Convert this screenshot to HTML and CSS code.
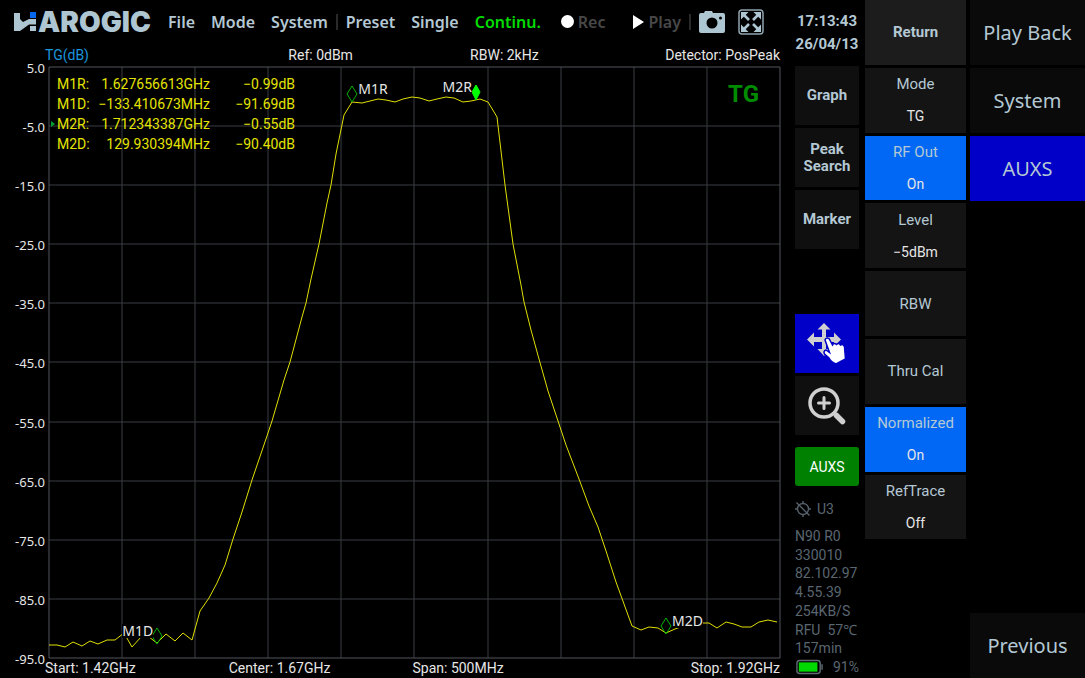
FILE: index.html
```html
<!DOCTYPE html>
<html lang="en">
<head>
    <meta charset="utf-8">
    <meta name="viewport" content="width=device-width, initial-scale=1">
    <title>Harogic - TG</title>
    <link rel="stylesheet" href="styles.css">
</head>
<body>
    <main class="screen">
        <header class="topbar">
            <div class="logo">
                <svg width="24" height="20" viewBox="0 0 24 20" aria-hidden="true">
                    <path fill="#aec5d2" d="M0 1 H6 V7 L9 10 L15 7 H22 V12.500 H15 L6 19 H0 Z M16 14 H22 V19 H16 Z"/>
                    <path fill="#0468f0" d="M16 0 H22 V6 H16 Z"/>
                </svg>
                <span class="logo-text">AROGIC</span>
            </div>
            <nav class="menu">
                <button class="menu-btn">File</button>
                <button class="menu-btn">Mode</button>
                <button class="menu-btn">System</button>
                <span class="divider"></span>
                <button class="menu-btn">Preset</button>
                <button class="menu-btn">Single</button>
                <button class="menu-btn running">Continu.</button>
                <button class="menu-btn dim rec"><span class="dot"></span>Rec</button>
                <button class="menu-btn dim play"><span class="triangle"></span>Play</button>
                <span class="divider"></span>
                <button class="icon-btn" aria-label="Screenshot">
                    <svg width="26" height="24" viewBox="0 0 26 24">
                        <path fill="#aec5d2" fill-rule="evenodd" d="M2 3 H5 L6 1 H13 L14 3 H24 Q26 3 26 5 V21 Q26 23 24 23 H2 Q0 23 0 21 V5 Q0 3 2 3 Z M13 7.500 A5.500 5.500 0 1 0 13 18.500 A5.500 5.500 0 1 0 13 7.500 Z M21.500 6.500 A1.500 1.500 0 1 0 21.500 9.500 A1.500 1.500 0 1 0 21.500 6.500 Z"/>
                    </svg>
                </button>
                <button class="icon-btn fullscreen" aria-label="Full screen">
                    <svg width="26" height="26" viewBox="0 0 26 26">
                        <rect x="1" y="1" width="24" height="24" rx="3" fill="none" stroke="#8fa3ae" stroke-width="1.500"/>
                        <g fill="#aec5d2" stroke="#aec5d2" stroke-width="2.600">
                            <path stroke="none" d="M3 3 H10.500 L3 10.500 Z M23 3 V10.500 L15.500 3 Z M3 23 V15.500 L10.500 23 Z M23 23 H15.500 L23 15.500 Z"/>
                            <path d="M5 5 L11 11 M21 5 L15 11 M5 21 L11 15 M21 21 L15 15"/>
                        </g>
                    </svg>
                </button>
            </nav>
        </header>

        <div class="info-row">
            <span class="trace-name">TG(dB)</span>
            <span>Ref: 0dBm</span>
            <span>RBW: 2kHz</span>
            <span>Detector: PosPeak</span>
        </div>

        <section class="chart">
            <div class="y-axis">
                <span>5.0</span>
                <span>-5.0</span>
                <span>-15.0</span>
                <span>-25.0</span>
                <span>-35.0</span>
                <span>-45.0</span>
                <span>-55.0</span>
                <span>-65.0</span>
                <span>-75.0</span>
                <span>-85.0</span>
                <span>-95.0</span>
            </div>
            <div class="plot">
                <svg class="graph" viewBox="0 0 731 591" preserveAspectRatio="none" aria-hidden="true">
                    <path class="grid" d="M73 0V591 M146 0V591 M219 0V591 M292 0V591 M365 0V591 M439 0V591 M512 0V591 M585 0V591 M658 0V591 M0 59H731 M0 118H731 M0 177H731 M0 236H731 M0 295H731 M0 355H731 M0 414H731 M0 473H731 M0 532H731"/>
                    <rect class="frame" x="0" y="0" width="731" height="591"/>
                    <polyline class="trace" points="0,578 8,578 16,580 24,575 33,579 41,574 49,577 58,573 66,573 75,566 83,580 92,570 100,570 108,576 117,567 126,574 134,566 143,573 151,544 160,531 168,516 176,498 184,472 193,445 203,413 219,366 223,354 235,313 241,295 253,250 257,236 262,212 270,177 278,136 282,118 287,87 295,48 303,35 313,36 321,34 329,32 337,33 346,35 354,32 363,30 371,31 380,34 388,32 397,30 405,31 414,35 422,34 431,32 439,35 448,50 456,118 464,177 472,218 475,235 482,263 490,292 499,324 509,354 517,378 530,412 540,439 549,460 557,484 567,515 583,559 592,563 600,560 609,561 617,566 626,562 634,559 651,556 660,556 668,561 677,555 685,557 693,560 702,560 710,555 719,553 728,555"/>
                </svg>

                <div class="marker right" style="left: 41.500%; top: 6%">
                    <svg width="12" height="18" viewBox="0 0 12 18"><path d="M6 1 L11 9 L6 17 L1 9 Z"/></svg>
                    <span>M1R</span>
                </div>
                <div class="marker left active" style="left: 58.400%; top: 5.600%">
                    <svg width="12" height="18" viewBox="0 0 12 18"><path d="M6 2 L10 9 L6 17 L2 9 Z"/></svg>
                    <span>M2R</span>
                </div>
                <div class="marker left" style="left: 14.800%; top: 97.600%">
                    <svg width="12" height="18" viewBox="0 0 12 18"><path d="M6 1 L11 9 L6 17 L1 9 Z"/></svg>
                    <span>M1D</span>
                </div>
                <div class="marker right" style="left: 84.400%; top: 95.900%">
                    <svg width="12" height="18" viewBox="0 0 12 18"><path d="M6 1 L11 9 L6 17 L1 9 Z"/></svg>
                    <span>M2D</span>
                </div>

                <table class="readout">
                    <tr><th scope="row">M1R:</th><td>1.627656613GHz</td><td>−0.99dB</td></tr>
                    <tr><th scope="row">M1D:</th><td>−133.410673MHz</td><td>−91.69dB</td></tr>
                    <tr class="selected"><th scope="row">M2R:</th><td>1.712343387GHz</td><td>−0.55dB</td></tr>
                    <tr><th scope="row">M2D:</th><td>129.930394MHz</td><td>−90.40dB</td></tr>
                </table>
                <div class="mode-tag">TG</div>
            </div>
        </section>

        <div class="freq-row">
            <span>Start: 1.42GHz</span>
            <span>Center: 1.67GHz</span>
            <span>Span: 500MHz</span>
            <span>Stop: 1.92GHz</span>
        </div>
    </main>

    <aside class="tools">
        <div class="clock">
            <time>17:13:43</time>
            <time>26/04/13</time>
        </div>
        <div class="tool-group">
            <button class="tool">Graph</button>
            <button class="tool">Peak Search</button>
            <button class="tool">Marker</button>
        </div>
        <div class="tool-group pointer-tools">
            <button class="tool selected" aria-label="Pan">
                <svg width="40" height="42" viewBox="0 0 40 42">
                    <path fill="#cfcfcf" d="M17 0 L23.500 6.500 H19 V14 H27 V9.500 L34 16.500 L27 23.500 V19 H19 V26 H23.500 L17 33 L10.500 26 H15 V19 H7 V23.500 L0 16.500 L7 9.500 V14 H15 V6.500 H10.500 Z"/>
                    <path fill="#fff" stroke="#0000c8" stroke-width="1.500" d="M18 17 Q19 14 22 15.500 L25.500 22 Q27 19.500 29.500 21.500 Q31.500 19.500 33.500 22 Q36.500 20.500 37.500 24 L38.500 36 L29 41 Q24 39 22 35 L17.500 31 Q16 28 19 27 L22.500 29.500 Z"/>
                </svg>
            </button>
            <button class="tool" aria-label="Zoom in">
                <svg width="40" height="40" viewBox="0 0 40 40" fill="none" stroke="#cfcfcf" stroke-linecap="round">
                    <circle cx="17" cy="17" r="14" stroke-width="3.500"/>
                    <path stroke-width="3" d="M17 11.500 V22.500 M11.500 17 H22.500"/>
                    <path stroke-width="3" d="M27 27 L29 29"/>
                    <path stroke-width="5.500" d="M29.500 29.500 L35.500 35.500"/>
                </svg>
            </button>
        </div>
        <button class="aux-btn">AUXS</button>
        <div class="status">
            <div class="gps">
                <svg width="16" height="16" viewBox="0 0 16 16" fill="none" stroke="#55616b" stroke-width="1.400">
                    <circle cx="8" cy="8" r="5.500"/>
                    <path d="M8 0V2.500 M8 13.500V16 M0 8H2.500 M13.500 8H16 M1.500 1.500 L14.500 14.500"/>
                </svg>
                <span>U3</span>
            </div>
            <span>N90 R0</span>
            <span>330010</span>
            <span>82.102.97</span>
            <span>4.55.39</span>
            <span>254KB/S</span>
            <span>RFU&nbsp; 57℃</span>
            <span>157min</span>
            <div class="battery">
                <svg width="29" height="16" viewBox="0 0 29 16">
                    <rect x="1" y="1" width="25" height="14" rx="3" fill="none" stroke="#5f6a74" stroke-width="1.500"/>
                    <rect x="3" y="3" width="20" height="10" fill="#00d800"/>
                    <path d="M28 5V11" stroke="#5f6a74" stroke-width="1.500"/>
                </svg>
                <span>91%</span>
            </div>
        </div>
    </aside>

    <aside class="softkeys">
        <button class="softkey return">Return</button>
        <button class="softkey">Mode<span>TG</span></button>
        <button class="softkey on">RF Out<span>On</span></button>
        <button class="softkey">Level<span>−5dBm</span></button>
        <button class="softkey">RBW</button>
        <button class="softkey">Thru Cal</button>
        <button class="softkey on">Normalized<span>On</span></button>
        <button class="softkey">RefTrace<span>Off</span></button>
    </aside>

    <nav class="tabs">
        <button class="tab">Play Back</button>
        <button class="tab">System</button>
        <button class="tab selected">AUXS</button>
        <button class="tab previous">Previous</button>
    </nav>
</body>
</html>
```
FILE: styles.css
```css
* {
    box-sizing: border-box;
}

body {
    display: grid;
    grid-template-columns: 1fr 64px 111px 115px;
    min-height: 100vh;
    margin: 0;
    background: #000;
    color: #e6e6e6;
    font-family: Roboto, "Noto Sans", sans-serif;
    font-size: 14px;
}

button {
    padding: 0;
    border: none;
    background: none;
    color: #b4c8d4;
    font-family: inherit;
    cursor: pointer;
}

svg {
    display: block;
}

/* Main screen */
.screen {
    display: flex;
    flex-direction: column;
    min-width: 0;
}

.topbar {
    display: flex;
    align-items: center;
    height: 43px;
    padding: 0 31px 0 14px;
}

.logo {
    display: flex;
    align-items: center;
    width: 154px;
}

.logo-text {
    font-family: Inter, sans-serif;
    font-size: 28px;
    font-weight: 900;
    line-height: 28px;
    color: #aec5d2;
}

.menu {
    display: flex;
    flex: 1;
    align-items: center;
    justify-content: space-between;
}

.menu-btn {
    display: flex;
    align-items: center;
    gap: 4px;
    font-family: "Noto Sans", sans-serif;
    font-size: 16px;
    font-weight: 600;
    line-height: 20px;
}

.running {
    color: #00dc00;
}

.dim {
    color: #484848;
}

.rec {
    margin-left: 4px;
}

.play {
    margin-left: 12px;
}

.fullscreen {
    margin-left: -3px;
}

.dot {
    width: 13px;
    height: 13px;
    border-radius: 50%;
    background: #fff;
}

.triangle {
    border-left: 11px solid #fff;
    border-top: 7px solid transparent;
    border-bottom: 7px solid transparent;
}

.divider {
    width: 2px;
    height: 16px;
    margin: 0 -8px;
    background: #2a2a2a;
}

.info-row,
.freq-row {
    display: grid;
    grid-template-columns: repeat(4, 1fr);
    padding: 0 15px 0 45px;
}

.info-row {
    height: 24px;
    line-height: 24px;
    text-align: center;
}

.info-row .trace-name {
    color: #1c96dc;
    text-align: left;
}

.info-row span:last-child,
.freq-row span:last-child {
    text-align: right;
}

/* Chart */
.chart {
    display: flex;
    flex: 1;
    padding-right: 15px;
}

.y-axis {
    display: flex;
    flex-direction: column;
    justify-content: space-between;
    width: 49px;
    margin: -8px 0 -10px;
    padding-right: 4px;
    font-family: "Noto Sans", sans-serif;
    font-size: 13px;
    line-height: 18px;
    text-align: right;
}

.plot {
    position: relative;
    flex: 1;
}

.graph {
    position: absolute;
    inset: 0;
    width: 100%;
    height: 100%;
    overflow: visible;
}

.graph * {
    fill: none;
    vector-effect: non-scaling-stroke;
}

.grid {
    stroke: #3a3d42;
}

.frame {
    stroke: #50545a;
}

.trace {
    stroke: #e0e000;
}

/* The diamond's lower tip is the marked point */
.marker {
    position: absolute;
}

.marker svg {
    position: absolute;
    left: -6px;
    bottom: -1px;
    fill: none;
    stroke: #00b400;
}

.marker span {
    position: absolute;
    bottom: 6px;
    background: #000;
    font-family: "Noto Sans", sans-serif;
    font-size: 14px;
    line-height: 14px;
}

.marker.right span {
    left: 6px;
}

.marker.left span {
    right: 4px;
}

.marker.active svg {
    fill: #00ff00;
    stroke: #00ff00;
}

.readout {
    position: absolute;
    top: 7px;
    left: 8px;
    width: 238px;
    border-collapse: collapse;
    color: #e4e400;
    line-height: 20px;
}

.readout th,
.readout td {
    padding: 0;
    font-weight: 400;
    text-align: right;
}

.readout th {
    width: 32px;
    text-align: left;
}

.readout td:last-child {
    width: 85px;
}

.readout .selected th::before {
    content: "";
    position: absolute;
    left: -6px;
    margin-top: 7px;
    border-left: 4px solid #00a030;
    border-top: 3px solid transparent;
    border-bottom: 3px solid transparent;
}

.mode-tag {
    position: absolute;
    top: 14px;
    right: 21px;
    color: #008c00;
    font-size: 24px;
    font-weight: 700;
    line-height: 26px;
}

.freq-row {
    height: 20px;
    line-height: 20px;
}

/* Tool column */
.tools {
    display: flex;
    flex-direction: column;
}

.clock {
    display: grid;
    height: 66px;
    padding: 10px 0;
    font-weight: 700;
    font-size: 15px;
    line-height: 23px;
    color: #b4c8d4;
    text-align: center;
}

.tool-group {
    display: grid;
    gap: 3px;
}

.pointer-tools {
    margin-top: 65px;
}

.tool {
    display: flex;
    align-items: center;
    justify-content: center;
    height: 59px;
    background: #0f0f0f;
    font-size: 15px;
    font-weight: 700;
    line-height: 17px;
}

.tool.selected {
    background: #0000c8;
}

.aux-btn {
    height: 39px;
    margin: 12px 0 14px;
    border-radius: 3px;
    background: #008000;
    color: #fff;
    font-size: 14px;
}

.status {
    display: flex;
    flex: 1;
    flex-direction: column;
    justify-content: space-between;
    padding-bottom: 2px;
    color: #5a6670;
    font-size: 14px;
    line-height: 18px;
}

.gps,
.battery {
    display: flex;
    align-items: center;
    gap: 6px;
}

.gps {
    margin-bottom: 8px;
}

.battery {
    gap: 10px;
    padding-left: 1px;
}

/* Soft keys */
.softkeys {
    display: grid;
    grid-template-rows: repeat(10, 1fr);
    padding: 0 4px 0 6px;
}

.softkey {
    display: flex;
    flex-direction: column;
    align-items: center;
    justify-content: center;
    gap: 14px;
    margin-bottom: 3px;
    background: #141414;
    font-size: 15px;
    line-height: 18px;
}

.softkey span {
    color: #e6e6e6;
    font-size: 14px;
}

.softkey.return {
    background: #1c1c1c;
    font-weight: 700;
}

.softkey.on {
    background: #0068f4;
}

/* Main tabs */
.tabs {
    display: grid;
    grid-template-rows: repeat(10, 1fr);
    gap: 3px;
}

.tab {
    background: #0a0a0a;
    font-family: "Noto Sans", sans-serif;
    font-size: 20px;
}

.tab.selected {
    background: #0000c8;
}

.previous {
    grid-row: 10;
}
```
